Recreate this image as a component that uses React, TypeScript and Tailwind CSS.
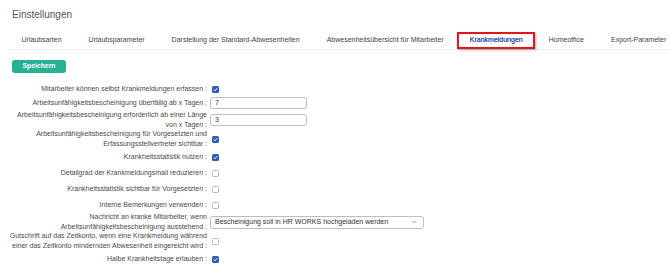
import React from "react";

const tabs = [
  "Urlaubsarten",
  "Urlaubsparameter",
  "Darstellung der Standard-Abwesenheiten",
  "Abwesenheitsübersicht für Mitarbeiter",
  "Krankmeldungen",
  "Homeoffice",
  "Export-Parameter",
];

function Check({ on }: { on: boolean }) {
  return on ? (
    <div className="ml-[2px] w-[7px] h-[7px] rounded-[1.5px] bg-[#2f5fae] flex items-center justify-center">
      <svg width="5" height="5" viewBox="0 0 10 10">
        <path d="M2 5.5 L4.2 7.8 L8 2.5" fill="none" stroke="white" strokeWidth="1.6" strokeLinecap="round" strokeLinejoin="round" />
      </svg>
    </div>
  ) : (
    <div className="ml-[2px] w-[7px] h-[7px] rounded-[1.5px] border border-[#bdbdbd] bg-white" />
  );
}

function Row({ h, label, children }: { h: string; label: React.ReactNode; children: React.ReactNode }) {
  return (
    <div className={`flex items-center ${h}`}>
      <div className="w-[207px] shrink-0 text-right leading-[10px] text-[7px] text-[#4a4a4a]">{label}</div>
      <div className="ml-[3px] flex items-center">{children}</div>
    </div>
  );
}

function TextInput({ v }: { v: string }) {
  return (
    <div className="w-[97px] h-[12px] border border-[#bdbdbd] rounded-[3px] flex items-center pl-[4px] text-[7px] text-[#333]">
      {v}
    </div>
  );
}

export default function App() {
  return (
    <div className="w-[670px] h-[278px] bg-white overflow-hidden font-['Liberation_Sans',Arial,sans-serif]">
      <div className="h-[32px] pl-[12px] pt-[9px] text-[10px] leading-[12px] text-[#555]">
        Einstellungen
      </div>
      <div className="ml-[8px] flex h-[18px] border-b border-[#efefef] whitespace-nowrap">
        {tabs.map((t) =>
          t === "Krankmeldungen" ? (
            <div
              key={t}
              className="h-[17px] px-[10.5px] flex items-center border-2 border-[#e8141b] shadow-[1px_1px_2px_rgba(0,0,0,0.35)] text-[7px] text-[#3553a8] [text-shadow:0_0_0.3px_#3553a8]"
            >
              {t}
            </div>
          ) : (
            <div key={t} className="h-[17px] px-[13.5px] flex items-center text-[7px] text-[#444]">
              {t}
            </div>
          )
        )}
      </div>
      <div className="ml-[12px] mt-[10px] w-[54px] h-[13px] rounded-[3px] bg-[#27b393] flex items-center justify-center text-white text-[6.8px] font-bold">
        Speichern
      </div>
      <div className="mt-[9px]">
        <Row h="h-[14px]" label="Mitarbeiter können selbst Krankmeldungen erfassen :">
          <Check on />
        </Row>
        <Row h="h-[14px]" label="Arbeitsunfähigkeitsbescheinigung überfällig ab x Tagen :">
          <TextInput v="7" />
        </Row>
        <Row
          h="h-[20px]"
          label={
            <>
              Arbeitsunfähigkeitsbescheinigung erforderlich ab einer Länge
              <br />
              von x Tagen :
            </>
          }
        >
          <TextInput v="3" />
        </Row>
        <Row
          h="h-[18px]"
          label={
            <>
              Arbeitsunfähigkeitsbescheinigung für Vorgesetzten und
              <br />
              Erfassungsstellvertreter sichtbar :
            </>
          }
        >
          <Check on />
        </Row>
        <Row h="h-[18px]" label="Krankheitsstatistik nutzen :">
          <Check on />
        </Row>
        <Row h="h-[14px]" label="Detailgrad der Krankmeldungsmail reduzieren :">
          <Check on={false} />
        </Row>
        <Row h="h-[18px]" label="Krankheitsstatistik sichtbar für Vorgesetzten :">
          <Check on={false} />
        </Row>
        <Row h="h-[14px]" label="Interne Bemerkungen verwenden :">
          <Check on={false} />
        </Row>
        <Row
          h="h-[20px]"
          label={
            <>
              Nachricht an kranke Mitarbeiter, wenn
              <br />
              Arbeitsunfähigkeitsbescheinigung ausstehend :
            </>
          }
        >
          <div className="w-[214px] h-[13px] border border-[#bdbdbd] rounded-[3px] flex items-center justify-between pl-[4px] pr-[6px] text-[7px] text-[#333]">
            <span>Bescheinigung soll in HR WORKS hochgeladen werden</span>
            <svg width="6" height="4" viewBox="0 0 12 8">
              <path d="M1.5 1.5 L6 6 L10.5 1.5" fill="none" stroke="#888" strokeWidth="1.3" />
            </svg>
          </div>
        </Row>
        <Row
          h="h-[18px]"
          label={
            <>
              Gutschrift auf das Zeitkonto, wenn eine Krankmeldung während
              <br />
              einer das Zeitkonto mindernden Abwesenheit eingereicht wird :
            </>
          }
        >
          <Check on={false} />
        </Row>
        <Row h="h-[18px]" label="Halbe Krankheitstage erlauben :">
          <Check on />
        </Row>
      </div>
    </div>
  );
}
